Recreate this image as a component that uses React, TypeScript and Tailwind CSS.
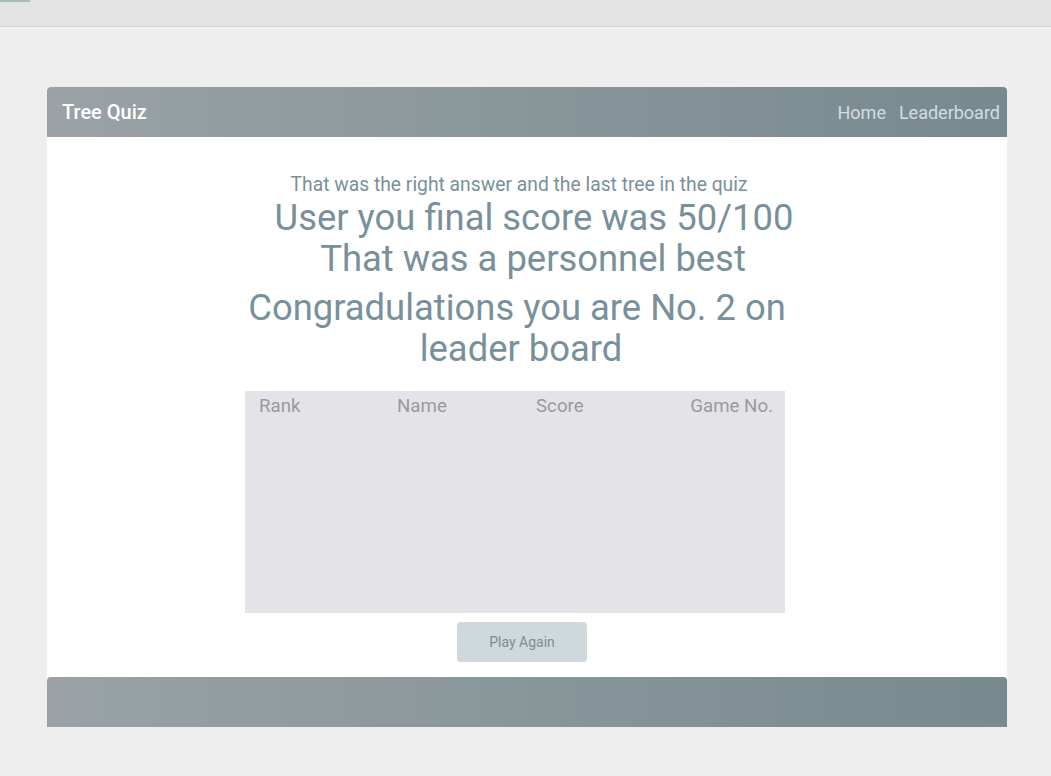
export default function App() {
  return (
    <div className="min-h-[776px] w-full bg-[#eeeeee]" style={{ fontFamily: "Roboto, 'Noto Sans', sans-serif" }}>
      <div className="relative h-[27px] border-b border-[#d4d4d4] bg-[#e3e3e3]">
        <div className="absolute left-0 top-0 h-[2px] w-[30px] bg-[#a9bdb0]" />
      </div>
      <div className="px-[47px] pt-[60px]">
        <div className="w-[960px] bg-white">
          <header className="flex h-[50px] items-center justify-between rounded-t-[4px] bg-gradient-to-r from-[#9aa2a6] to-[#778a8f] pl-[15px] pr-[7px]">
            <span className="text-[20px] font-medium text-white">Tree Quiz</span>
            <nav className="flex gap-[13px] text-[18px] text-[#d3dde0]">
              <span>Home</span>
              <span>Leaderboard</span>
            </nav>
          </header>
          <main className="flex flex-col items-center pt-[36px] pb-[15px] pr-[24px]">
            <div className="flex w-[540px] flex-col items-center text-[#78909c]">
              <p className="whitespace-nowrap pl-[8px] text-[19.3px] leading-[24px]">That was the right answer and the last tree in the quiz</p>
              <p className="whitespace-nowrap pl-[38px] text-[36.4px] leading-[41px]">User you final score was 50/100</p>
              <p className="whitespace-nowrap pl-[36px] text-[36.4px] leading-[41px]">That was a personnel best</p>
              <p className="mt-[8px] whitespace-nowrap pl-[4px] text-[36.4px] leading-[41px]">Congradulations you are No. 2 on</p>
              <p className="whitespace-nowrap pl-[12px] text-[36.4px] leading-[41px]">leader board</p>
            </div>
            <div className="mt-[22px] h-[222px] w-[540px] bg-[#e4e4e8] pt-[1px] text-[18.7px] text-[#999a9f]">
              <div className="grid grid-cols-4">
                <span className="pl-[14px]">Rank</span>
                <span className="pl-[17px]">Name</span>
                <span className="pl-[21px]">Score</span>
                <span className="pr-[12px] text-right">Game No.</span>
              </div>
            </div>
            <button className="ml-[14px] mt-[9px] h-[40px] w-[130px] rounded-[4px] bg-[#cfd8dc] text-[14px] text-[#7f8c92]">Play Again</button>
          </main>
          <footer className="h-[50px] rounded-t-[4px] bg-gradient-to-r from-[#9aa2a6] to-[#778a8f]" />
        </div>
      </div>
    </div>
  );
}
